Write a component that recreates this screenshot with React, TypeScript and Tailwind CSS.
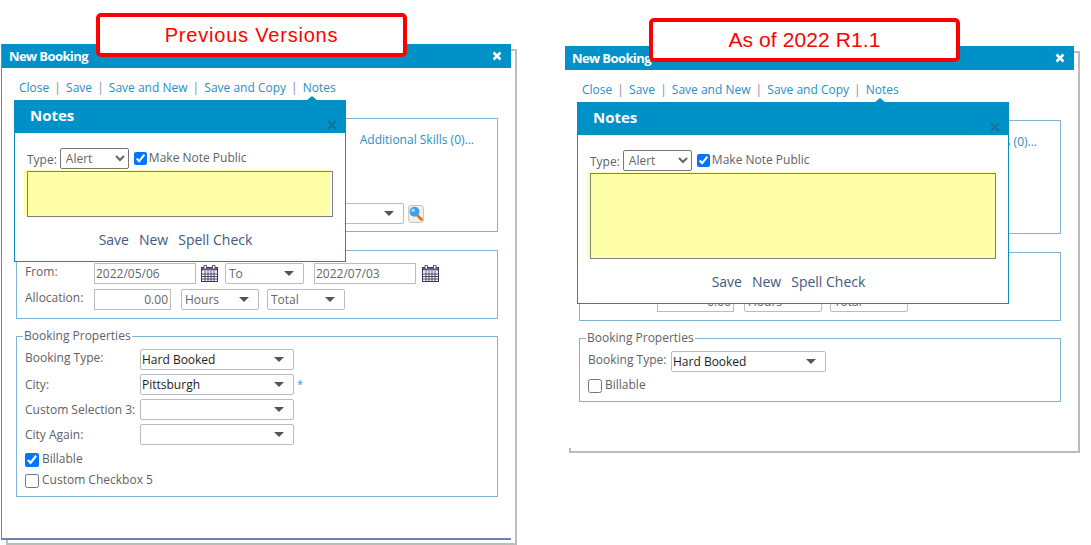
import type { ReactNode } from 'react';

function Caret() {
  return <span className="h-0 w-0 border-x-[5px] border-t-[5px] border-x-transparent border-t-[#555]" />;
}

function FakeSelect({ value = '', className = '', dark = false }: { value?: string; className?: string; dark?: boolean }) {
  return (
    <div className={`flex h-[21px] shrink-0 items-center justify-between rounded-[2px] border border-[#b9bdc0] bg-white pr-[9px] text-[12px] ${dark ? 'pl-[1px] text-[#1c1c1c]' : 'pl-[3px] text-[#666]'} ${className}`}>
      <span>{value}</span>
      <Caret />
    </div>
  );
}

function CalendarIcon() {
  return (
    <svg width="17" height="17" viewBox="0 0 17 17" className="shrink-0">
      <rect x="0.5" y="2.5" width="16" height="14" fill="#fdfbf2" stroke="#3b3560" />
      <rect x="1" y="3" width="15" height="2.5" fill="#6d5f88" />
      <rect x="3" y="0.5" width="2.5" height="3.5" fill="#fff" stroke="#5a3a60" strokeWidth="0.8" />
      <rect x="11.5" y="0.5" width="2.5" height="3.5" fill="#fff" stroke="#5a3a60" strokeWidth="0.8" />
      <path d="M1 9h15M1 11.5h15M1 14h15M4 6v10M7 6v10M10 6v10M13 6v10" stroke="#3b3560" strokeWidth="0.9" />
    </svg>
  );
}

function SearchButton() {
  return (
    <div className="ml-[4px] flex h-[18px] w-[16px] items-center justify-center rounded-[3px] border border-[#cfc9b6] bg-[#f3f0e6]">
      <svg width="14" height="15" viewBox="0 0 14 15">
        <path d="M8 9l4.5 4.5" stroke="#e8692a" strokeWidth="2.6" strokeLinecap="round" />
        <circle cx="5.5" cy="5.8" r="5" fill="#3f9fea" />
        <circle cx="4.2" cy="4.2" r="1.8" fill="#a5dafa" />
      </svg>
    </div>
  );
}

function Check({ checked = false, label, mid = false }: { checked?: boolean; label: string; mid?: boolean }) {
  return (
    <label className={`flex items-center text-[12px] text-[#5f6266] ${mid ? 'h-[21px] gap-[3px]' : 'gap-[2px]'}`}>
      <input type="checkbox" defaultChecked={checked} className={`m-0 accent-[#0075ff] ${mid ? 'h-[14px] w-[14px]' : 'h-[13px] w-[13px]'}`} />
      <span className={mid ? '-mt-[2px]' : '-mt-[1px]'}>{label}</span>
    </label>
  );
}

function NotesPopup({ wide }: { wide?: boolean }) {
  return (
    <div className={`absolute left-[12px] top-[56px] flex flex-col border border-[#0a8cc4] bg-white ${wide ? 'h-[202px] w-[432px]' : 'h-[162px] w-[332px]'}`}>
      <span className={`absolute -top-[5px] h-0 w-0 border-x-[6px] border-b-[5px] border-x-transparent border-b-[#0091c9] ${wide ? 'left-[296px]' : 'left-[291px]'}`} />
      <div className="relative h-[32px] shrink-0 bg-[#0091c9] pl-[15px] pt-[4px] text-[15px] font-bold leading-[20px] text-white">
        Notes
        <svg width="10" height="10" viewBox="0 0 10 10" className="absolute right-[8px] top-[19px]">
          <path d="M1 1l8 8M9 1l-8 8" stroke="#19709a" strokeWidth="1.8" />
        </svg>
      </div>
      <div className="flex items-center pl-[12px] pt-[14px] text-[12px] text-[#5f6266]">
        <span className="mr-[3px] mt-[4px]">Type:</span>
        <select defaultValue="Alert" className="h-[21px] w-[69px] rounded-[2px] border border-[#767676] bg-white pl-[1px] text-[12px] text-[#666]">
          <option>Alert</option>
        </select>
        <div className="ml-[5px]">
          <Check checked label="Make Note Public" />
        </div>
      </div>
      <div className={`relative ml-[12px] mt-[2px] w-[calc(100%-24px)] ${wide ? 'h-[86px]' : 'h-[46px]'}`}>
        <div className={`absolute -left-[3px] -top-px bottom-px bg-[#ffffa8] ${wide ? 'right-0' : 'right-[3px]'}`} />
        <textarea className="relative block h-full w-full resize-none border border-[#808080] bg-transparent" />
      </div>
      <div className="mt-[12px] flex justify-center gap-[10px] pr-[9px] text-[14px] text-[#3d5a80]">
        <span>Save</span>
        <span>New</span>
        <span>Spell Check</span>
      </div>
    </div>
  );
}

function Sep() {
  return <span className="inline-block w-[16.8px] text-center text-[#7f8c96]">|</span>;
}

function Row({ label, width, raised = false, className = '', children }: { label: string; width: string; raised?: boolean; className?: string; children: ReactNode }) {
  return (
    <div className={`flex items-center ${className}`}>
      <span className={`shrink-0 text-[12px] text-[#5f6266] ${raised ? '-mt-[3px]' : ''} ${width}`}>{label}</span>
      {children}
    </div>
  );
}

function BookingWindow({ modern }: { modern?: boolean }) {
  return (
    <div className={`relative -ml-[7px] -mt-[7px] h-[calc(100%+4px)] w-[510px] border-b-2 border-l bg-white ${modern ? 'border-transparent' : 'border-b-[#6c86ab] border-l-[#6c86ab]'}`}>
      <div className="flex h-[24px] items-center justify-between bg-[#0091c9] pl-[7px] pr-[9px] text-[13px] font-bold tracking-[-0.6px] text-white">
        <span className="mt-px">New Booking</span>
        <svg width="10" height="10" viewBox="0 0 10 10">
          <path d="M1.5 1.5l7 7M8.5 1.5l-7 7" stroke="#fff" strokeWidth="2.6" />
        </svg>
      </div>

      <div className="px-[14px]">
        <div className="ml-[3px] h-[50px] pt-[11px] text-[12px] leading-[18px] text-[#2a8ec5]">
          <span>Close</span>
          <Sep />
          <span>Save</span>
          <Sep />
          <span>Save and New</span>
          <Sep />
          <span>Save and Copy</span>
          <Sep />
          <span>Notes</span>
        </div>

        {/* Resource */}
        <fieldset className="h-[114px] w-[482px] border border-[#7fb4d3] pt-[12px]">
          <div className="flex justify-end pr-[23px] text-[12px] leading-[18px] text-[#2a8ec5]">Additional Skills (0)...</div>
          <div className="ml-[123px] mt-[54px] flex items-center">
            <FakeSelect className="w-[264px]" />
            <SearchButton />
          </div>
        </fieldset>

        {/* Dates */}
        <fieldset className="mt-[18px] flex h-[69px] w-[482px] flex-col gap-[5px] border border-[#7fb4d3] pl-[8px] pt-[12px]">
          <Row label="From:" width="w-[69px]" raised className={modern ? 'invisible' : ''}>
            <input readOnly value="2022/05/06" className="h-[21px] w-[102px] border border-[#b9bdc0] pl-px text-[12px] text-[#666]" />
            <div className="ml-[5px] mr-[7px]"><CalendarIcon /></div>
            <FakeSelect value="To" className="w-[79px]" />
            <input readOnly value="2022/07/03" className="ml-[10px] h-[21px] w-[102px] border border-[#b9bdc0] pl-px text-[12px] text-[#666]" />
            <div className="ml-[6px]"><CalendarIcon /></div>
          </Row>
          <Row label="Allocation:" width="w-[69px]" raised>
            <input readOnly value="0.00" className="h-[21px] w-[77px] border border-[#b9bdc0] pr-[2px] text-right text-[12px] text-[#666]" />
            <FakeSelect value="Hours" className="ml-[10px] w-[78px]" />
            <FakeSelect value="Total" className="ml-[8px] w-[78px]" />
          </Row>
        </fieldset>

        {/* Properties */}
        <fieldset className="mt-[9px] w-[482px] border border-[#7fb4d3] pb-[5px] pl-[8px]">
          <legend className="-ml-[2px] px-px text-[12px] leading-[16px] text-[#5f6266]">Booking Properties</legend>
          {modern ? (
            <div className="mt-[5px] flex flex-col gap-[3px]">
              <Row label="Booking Type:" width="w-[83px]" raised>
                <FakeSelect dark value="Hard Booked" className="w-[155px]" />
              </Row>
              <Check label="Billable" mid />
            </div>
          ) : (
            <div className="mt-[5px] flex flex-col gap-[4px]">
              <Row label="Booking Type:" width="w-[115px]" raised>
                <FakeSelect dark value="Hard Booked" className="w-[154px]" />
              </Row>
              <Row label="City:" width="w-[115px]">
                <FakeSelect dark value="Pittsburgh" className="w-[154px]" />
                <span className="ml-[3px] text-[11px] text-[#2a9bd8]">*</span>
              </Row>
              <Row label="Custom Selection 3:" width="w-[115px]">
                <FakeSelect className="w-[154px]" />
              </Row>
              <Row label="City Again:" width="w-[115px]">
                <FakeSelect className="w-[154px]" />
              </Row>
              <div>
                <Check checked label="Billable" mid />
                <Check label="Custom Checkbox 5" mid />
              </div>
            </div>
          )}
        </fieldset>
      </div>

      <NotesPopup wide={modern} />
    </div>
  );
}

export default function App() {
  return (
    <div className="relative flex h-[545px] w-[1091px] items-start overflow-hidden bg-white font-['Open_Sans',sans-serif]">
      <div className="ml-[6px] mt-[49px] h-[496px] w-[511px] border-2 border-[#bcbcbc]">
        <BookingWindow />
      </div>
      <div className="ml-[52px] mt-[51px] h-[402px] w-[511px] border-2 border-[#bcbcbc]">
        <BookingWindow modern />
      </div>

      {/* Version callouts */}
      <div className="absolute left-[96px] top-[13px] flex h-[44px] w-[311px] items-center justify-center rounded-[5px] border-4 border-[#ff0000] bg-white font-['Liberation_Sans',sans-serif] text-[20px] tracking-[0.8px] text-[#ff0000]">
        Previous Versions
      </div>
      <div className="absolute left-[649px] top-[18px] flex h-[44px] w-[311px] items-center justify-center rounded-[5px] border-4 border-[#ff0000] bg-white font-['Liberation_Sans',sans-serif] text-[21px] tracking-[0.1px] text-[#ff0000]">
        As of 2022 R1.1
      </div>
    </div>
  );
}
